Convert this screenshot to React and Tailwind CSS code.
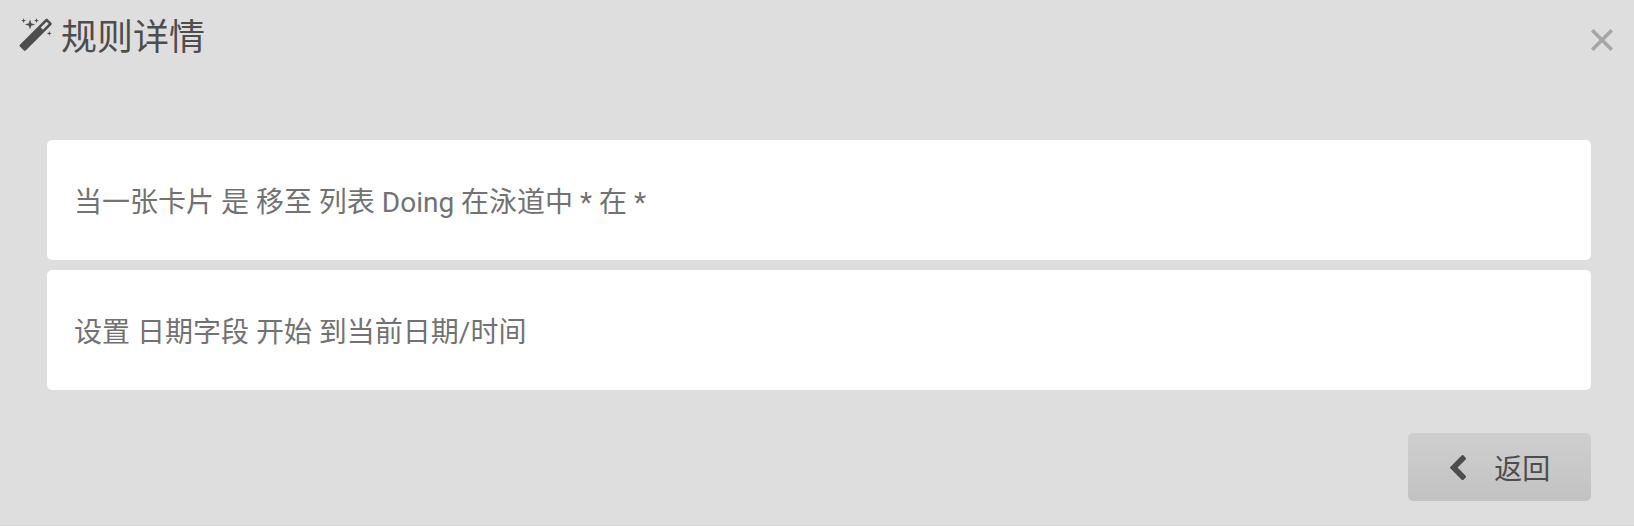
function MagicIcon() {
  return (
    <svg className="mt-[7px] mr-[8.5px] size-[33.4px]" viewBox="0 0 1664 1664" fill="currentColor">
      <path d="M1190 581l293-293-107-107-293 293zm447-293q0 27-18 45L333 1619q-18 18-45 18t-45-18L45 1421q-18-18-18-45t18-45L1331 45q18-18 45-18t45 18l198 198q18 18 18 45zM259 98l98 30-98 30-30 98-30-98-98-30 98-30 30-98zm350 162l196 60-196 60-60 196-60-196-196-60 196-60 60-196zm930 478l98 30-98 30-30 98-30-98-98-30 98-30 30-98zM899 98l98 30-98 30-30 98-30-98-98-30 98-30 30-98z" />
    </svg>
  );
}

function ChevronIcon() {
  return (
    <svg className="mt-px mr-[28px] h-[25.2px] w-[16.2px]" viewBox="410 26 1036 1612" fill="currentColor">
      <path d="M1427 301l-531 531 531 531q19 19 19 45t-19 45l-166 166q-19 19-45 19t-45-19l-742-742q-19-19-19-45t19-45l742-742q19-19 45-19t45 19l166 166q19 19 19 45t-19 45z" />
    </svg>
  );
}

function Rule({ children }) {
  return (
    <div className="flex h-[120px] items-center rounded-[5px] bg-white px-[27px] pt-[5px] text-[28px] leading-10 text-[#727272]">
      {children}
    </div>
  );
}

export default function App() {
  return (
    <main className="h-[526px] overflow-hidden border-b border-[#d6d6d6] bg-[#dedede] font-['Roboto','Noto_Sans_CJK_SC',sans-serif] text-[#4d4d4d]">
      <header className="flex h-[140px] items-start justify-between pr-[21px] pl-[19px]">
        <h2 className="flex items-start pt-[11px] text-[36px] leading-[54px]">
          <MagicIcon />
          规则详情
        </h2>
        <button className="mt-[29px]" aria-label="关闭">
          <svg className="size-[22px]" viewBox="0 0 22 22" stroke="#a6a6a6" strokeWidth="3.6">
            <path d="M1.2 1.2 20.8 20.8M20.8 1.2 1.2 20.8" />
          </svg>
        </button>
      </header>
      <section className="flex flex-col gap-[10px] pr-[43px] pl-[47px]">
        <Rule>当一张卡片 是 移至 列表 Doing 在泳道中 * 在 *</Rule>
        <Rule>设置 日期字段 开始 到当前日期/时间</Rule>
        <button className="mt-[33px] flex h-[68px] w-[183px] items-center self-end rounded-[5px] bg-linear-to-b from-[#cfcfcf] to-[#c2c2c2] pl-[42px] text-[28px]">
          <ChevronIcon />
          <span className="pt-[5px]">返回</span>
        </button>
      </section>
    </main>
  );
}
